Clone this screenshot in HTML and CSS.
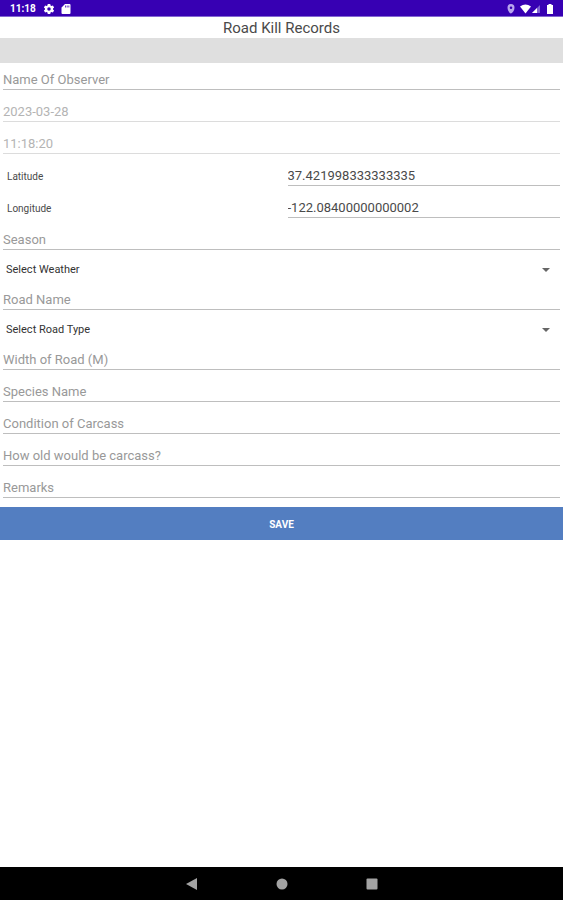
FILE: index.html
```html
<!DOCTYPE html>
<html lang="en">
<head>
  <meta charset="UTF-8" />
  <meta name="viewport" content="width=device-width, initial-scale=1.0" />
  <title>Road Kill Records</title>
  <link rel="stylesheet" href="styles.css">
</head>
<body>
  <div class="status-bar">
    <div class="status-group">
      <span class="clock">11:18</span>
      <svg viewBox="0 0 24 24" width="12" height="12"><path fill="#fff" fill-rule="evenodd" d="M9.500 2h5l.6 3 1.800 1 2.900-1 2.400 4.200-2.200 2v1.700l2.200 2-2.400 4.200-2.900-1-1.800 1-.6 3h-5l-.6-3-1.800-1-2.900 1-2.400-4.200 2.200-2v-1.700l-2.200-2L4.200 5l2.900 1 1.800-1zM12 8.500a3.500 3.500 0 1 0 0 7 3.500 3.500 0 0 0 0-7z"/></svg>
      <svg viewBox="0 0 24 24" width="12" height="12"><path fill="#fff" fill-rule="evenodd" d="M10 2h9a2 2 0 0 1 2 2v16a2 2 0 0 1-2 2H5a2 2 0 0 1-2-2V9zM10 5v4h1.500V5zM13.500 5v4H15V5zM17 5v4h1.500V5z"/></svg>
    </div>
    <div class="status-group right">
      <svg viewBox="0 0 8 12" width="8" height="12"><path fill="#b9a5ee" fill-rule="evenodd" d="M4 1a3.500 3.700 0 0 1 3.500 3.700C7.500 7.500 5.500 10 4 10.500 2.500 10 .5 7.500.5 4.700A3.500 3.700 0 0 1 4 1zM4 3.500a1.300 1.300 0 1 0 0 2.600 1.300 1.300 0 0 0 0-2.600z"/></svg>
      <svg viewBox="0 0 24 12" width="24" height="12"><path fill="#fff" d="M1 3.500Q6.500-.5 12 3.500L6.500 10.500z"/><path fill="#8062d4" d="M21 2v8h-8z"/><path fill="#fff" d="M18 5v5h-5z"/></svg>
      <svg viewBox="0 0 6 12" width="6" height="12"><path fill="#fff" d="M1.500 1h3v1H6v9H0V2h1.500z"/></svg>
    </div>
  </div>

  <h1 class="title">Road Kill Records</h1>
  <div class="band"></div>

  <form class="record-form">
    <div class="field"><input type="text" aria-label="Name Of Observer" placeholder="Name Of Observer"></div>
    <div class="field"><input type="text" aria-label="Date" value="2023-03-28" disabled></div>
    <div class="field"><input type="text" aria-label="Time" value="11:18:20" disabled></div>
    <div class="field split">
      <label for="latitude">Latitude</label>
      <input type="text" id="latitude" value="37.421998333333335">
    </div>
    <div class="field split">
      <label for="longitude">Longitude</label>
      <input type="text" id="longitude" value="-122.08400000000002">
    </div>
    <div class="field"><input type="text" aria-label="Season" placeholder="Season"></div>
    <div class="spinner">
      <select aria-label="Weather">
        <option>Select Weather</option>
      </select>
    </div>
    <div class="field"><input type="text" aria-label="Road Name" placeholder="Road Name"></div>
    <div class="spinner">
      <select aria-label="Road Type">
        <option>Select Road Type</option>
      </select>
    </div>
    <div class="field"><input type="text" aria-label="Width of Road (M)" placeholder="Width of Road (M)"></div>
    <div class="field"><input type="text" aria-label="Species Name" placeholder="Species Name"></div>
    <div class="field"><input type="text" aria-label="Condition of Carcass" placeholder="Condition of Carcass"></div>
    <div class="field"><input type="text" aria-label="How old would be carcass?" placeholder="How old would be carcass?"></div>
    <div class="field"><input type="text" aria-label="Remarks" placeholder="Remarks"></div>
    <button type="button" class="save">SAVE</button>
  </form>

  <nav class="nav-bar">
    <button type="button" aria-label="Back"><svg viewBox="0 0 12 12" width="12" height="12"><path fill="#a3a3a3" d="M11 0v12L0 6z"/></svg></button>
    <button type="button" aria-label="Home"><svg viewBox="0 0 12 12" width="12" height="12"><circle cx="6" cy="6" r="5.500" fill="#a3a3a3"/></svg></button>
    <button type="button" aria-label="Recents"><svg viewBox="0 0 12 12" width="12" height="12"><rect x=".5" y=".5" width="11" height="11" rx="1" fill="#a3a3a3"/></svg></button>
  </nav>
</body>
</html>
```

FILE: styles.css
```css
:root {
  --primary: #3700b3;
  --save: #537ec1;
  --line: #bebebe;
  --hint: #999999;
  --text: #4a4a4a;
}

* {
  box-sizing: border-box;
}

body {
  font-family: Roboto, sans-serif;
  margin: 0;
  background-color: #fff;
  color: var(--text);
  display: flex;
  flex-direction: column;
  min-height: 100vh;
}

.status-bar {
  display: flex;
  justify-content: space-between;
  align-items: center;
  height: 17px;
  padding: 2px 10px 0;
  background-color: var(--primary);
  border-bottom: 1px solid #8467d2;
  color: #fff;
}

.status-group {
  display: flex;
  align-items: center;
  gap: 5px;
}

.status-group.right {
  gap: 4px;
}

.clock {
  font-size: 10px;
  font-weight: 700;
  line-height: 14px;
  margin-right: 2px;
}

.title {
  margin: 0;
  padding-top: 2px;
  font-size: 15px;
  font-weight: 400;
  line-height: 19px;
  text-align: center;
}

.band {
  height: 25px;
  background-color: #dfdfdf;
}

.record-form {
  display: flex;
  flex-direction: column;
}

.field {
  display: flex;
  height: 32px;
  padding: 6px 3px 5px;
}

.field input {
  flex: 1;
  min-width: 0;
  padding: 0;
  border: none;
  border-bottom: 1px solid var(--line);
  border-radius: 0;
  background: none;
  font-family: inherit;
  font-size: 13px;
  color: var(--text);
  outline: none;
}

.field input::placeholder {
  color: var(--hint);
  opacity: 1;
}

.field input:disabled {
  color: #b4b4b4;
  border-bottom-color: #dcdcdc;
}

.split label {
  flex: 1;
  padding-left: 4px;
  font-size: 10px;
  line-height: 24px;
}

.split input {
  margin-left: 8px;
}

.spinner {
  position: relative;
  height: 28px;
}

.spinner select {
  width: 100%;
  height: 28px;
  padding: 0 6px;
  border: none;
  background: none;
  appearance: none;
  font-family: inherit;
  font-size: 11px;
  color: #333;
}

/* drop-down arrow */
.spinner::after {
  content: "";
  position: absolute;
  top: 13px;
  right: 13px;
  border: 4px solid transparent;
  border-top-color: #666;
  border-bottom: none;
  pointer-events: none;
}

.save {
  height: 33px;
  margin-top: 4px;
  padding: 2px 0 0;
  border: none;
  background-color: var(--save);
  color: #fff;
  font-family: inherit;
  font-size: 10px;
  font-weight: 700;
}

.nav-bar {
  display: flex;
  justify-content: center;
  align-items: center;
  gap: 78px;
  height: 33px;
  margin-top: auto;
  background-color: #000;
}

.nav-bar button {
  display: flex;
  padding: 0;
  border: none;
  background: none;
}
```
